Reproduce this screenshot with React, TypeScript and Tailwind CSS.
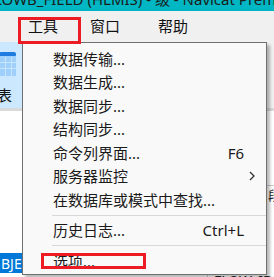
const font = { fontFamily: '"Noto Sans", "Noto Sans CJK SC", sans-serif' };

type Item = { label: string; shortcut?: string; sub?: boolean };

const group1: Item[] = [
  { label: "数据传输..." },
  { label: "数据生成..." },
  { label: "数据同步..." },
  { label: "结构同步..." },
  { label: "命令列界面...", shortcut: "F6" },
  { label: "服务器监控", sub: true },
  { label: "在数据库或模式中查找..." },
];

function MenuRow({ item }: { item: Item }) {
  return (
    <div className="flex h-[23.5px] items-center pl-[30px] pr-[22px] text-[15px] text-[#1a1a1a]">
      <span className="flex-1 whitespace-nowrap">{item.label}</span>
      {item.shortcut && <span className="whitespace-nowrap">{item.shortcut}</span>}
      {item.sub && (
        <svg className="-mr-[12px] ml-auto" width="8" height="10" viewBox="0 0 8 10">
          <path d="M2 1 L6 5 L2 9" fill="none" stroke="#333" strokeWidth="1.3" />
        </svg>
      )}
    </div>
  );
}

function Separator() {
  return (
    <div className="flex h-[7px] items-center pl-[29px]">
      <div className="h-px flex-1 bg-[#d7d7d7]" />
    </div>
  );
}

export default function App() {
  return (
    <div className="relative h-[277px] w-[274px] overflow-hidden bg-white" style={font}>
      {/* title bar, only its lower half is on screen */}
      <div className="h-[11px] overflow-hidden bg-[#00b7c3]">
        <div className="-mt-[11px] -ml-[6px] whitespace-nowrap text-[15px] leading-[20px] text-[#1b1b1b]">
          LOWB_FIELD (HLMIS) - 级 - Navicat Premium
        </div>
      </div>

      {/* menu bar */}
      <div className="flex h-[31px] items-center bg-[#f0f0f0] text-[15px] text-[#111]">
        <span className="ml-[28px]">工具</span>
        <span className="ml-[32px]">窗口</span>
        <span className="ml-[38px]">帮助</span>
      </div>

      {/* toolbar */}
      <div className="flex h-[66px] bg-[#f0f0f0]">
        <div className="flex w-[30px] flex-col items-start bg-[#cce8ff] pt-[10px]">
          <svg width="17" height="25" viewBox="0 0 17 25" className="-ml-[1px]">
            <rect x="0" y="0" width="17" height="5" rx="2" fill="#1e7be0" />
            <rect x="0" y="4" width="17" height="20" fill="#9fd0fb" />
            <rect x="0" y="10" width="17" height="1" fill="#c8e5fd" />
            <rect x="0" y="16" width="17" height="1" fill="#c8e5fd" />
            <rect x="6" y="5" width="1" height="19" fill="#c8e5fd" />
            <rect x="12" y="5" width="1" height="19" fill="#c8e5fd" />
          </svg>
          <span className="-ml-[3px] mt-[8px] text-[15px] leading-[20px] text-[#111]">表</span>
        </div>
      </div>
      <div className="h-[3px] bg-[#dadada]" />

      {/* content area */}
      <div className="relative h-[142px]">
        <div className="absolute right-0 top-[74px] h-px w-[12px] bg-[#cfcfcf]" />
        <div className="absolute left-[268px] top-[76px] text-[13px] leading-[16px] text-[#222]">段</div>
      </div>
      <div className="flex h-[20px]">
        <div className="flex w-[40px] items-center bg-[#0078d7] pl-[1px] text-[14px] text-white">BJECT</div>
      </div>
      <div className="flex">
        <div className="ml-[207px] h-[10px] border-l border-[#d0d0d0] pl-[6px] text-[14px] leading-[16px] text-[#222]">
          FLOW_ID
        </div>
      </div>

      {/* dropdown menu */}
      <div className="absolute left-[22px] top-[42px] w-[245px] border border-[#707070] bg-[#f9f9f9] pt-[4px] pb-[1px] shadow-[3px_3px_3px_rgba(0,0,0,0.28)]">
        {group1.map((item) => (
          <MenuRow key={item.label} item={item} />
        ))}
        <Separator />
        <MenuRow item={{ label: "历史日志...", shortcut: "Ctrl+L" }} />
        <Separator />
        <MenuRow item={{ label: "选项..." }} />
      </div>

      {/* red annotation boxes */}
      <div className="absolute left-[18px] top-[17px] h-[27px] w-[63px] border-[3px] border-[#ed1c24]" />
      <div className="absolute left-[41px] top-[253px] h-[16px] w-[105px] border-[3px] border-[#ed1c24]" />
    </div>
  );
}
